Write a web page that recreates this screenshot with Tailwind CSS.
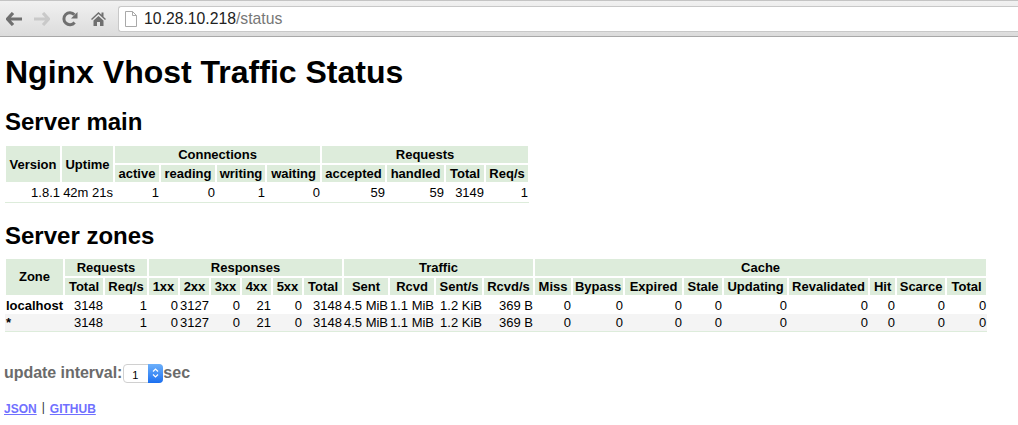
<!DOCTYPE html>
<html lang="en">
<head>
    <meta charset="UTF-8">
    <title>Nginx Vhost Traffic Status</title>
    <script src="https://cdn.jsdelivr.net/npm/@tailwindcss/browser@4"></script>
</head>
<body class="bg-white text-black font-['Liberation_Sans',Arial,sans-serif] overflow-hidden">
    <!-- browser toolbar -->
    <div class="h-[37px] flex items-center border-t border-b border-t-[#c4c4c4] border-b-[#a8a8a8] bg-gradient-to-b from-[#f1f1f1] to-[#dcdcdc] pl-[6px]">
        <svg class="w-[16px] h-[14px]" viewBox="0 0 16 14"><path d="M7 1 1.500 7 7 13M2 7h14" fill="none" stroke="#6f6f6f" stroke-width="3.200"/></svg>
        <svg class="w-[16px] h-[14px] ml-[12px]" viewBox="0 0 16 14"><path d="M9 1l5.500 6L9 13M14 7H0" fill="none" stroke="#c9c9c9" stroke-width="3.200"/></svg>
        <svg class="w-[16px] h-[16px] ml-[12px]" viewBox="0 0 16 16"><path d="M12.600 11.500A6 6 0 1 1 12.400 3.800" fill="none" stroke="#6f6f6f" stroke-width="3"/><path d="M15.500 1v6.500H9z" fill="#6f6f6f"/></svg>
        <svg class="w-[15px] h-[15px] ml-[13px]" viewBox="0 0 15 15"><path d="M7.500 1 0 8l1 1 6.500-6 6.500 6 1-1-2.500-2.300V1.500h-2v2.300zM2.500 9.500 7.500 5l5 4.500V15H9v-4H6v4H2.500z" fill="#6f6f6f"/></svg>
        <div class="ml-[12px] flex-1 h-[26px] flex items-center bg-white border border-[#c8c8c8] rounded-l-[3px] border-r-0 pl-[6px]">
            <svg class="w-[12px] h-[16px]" viewBox="0 0 12 16"><path d="M.5.500h7l4 4v11H.5zM7.500.500v4h4" fill="#fff" stroke="#a9a9a9"/></svg>
            <span class="ml-[7px] text-[15.75px] leading-[20px] text-[#222]">10.28.10.218<span class="text-[#777]">/status</span></span>
        </div>
    </div>

    <div class="px-[5px]">
        <h1 class="text-[32px] leading-[40px] font-bold mt-[15px]">Nginx Vhost Traffic Status</h1>
        <h2 class="text-[24px] leading-[28px] font-bold mt-[16px]">Server main</h2>

        <table class="mt-[8px] -ml-[1px] border-collapse table-fixed w-[524px] text-[13px] leading-[15px]">
            <colgroup>
                <col class="w-[56px]"><col class="w-[53px]"><col class="w-[46px]"><col class="w-[56px]"><col class="w-[50px]"><col class="w-[55px]"><col class="w-[65px]"><col class="w-[59px]"><col class="w-[40px]"><col class="w-[44px]">
            </colgroup>
            <thead class="[&_th]:bg-[#ddecdb] [&_th]:border-2 [&_th]:border-white [&_th]:h-[19px] [&_th]:p-0 [&_th]:font-bold">
                <tr>
                    <th rowspan="2">Version</th>
                    <th rowspan="2">Uptime</th>
                    <th colspan="4">Connections</th>
                    <th colspan="4">Requests</th>
                </tr>
                <tr>
                    <th>active</th><th>reading</th><th>writing</th><th>waiting</th>
                    <th>accepted</th><th>handled</th><th>Total</th><th>Req/s</th>
                </tr>
            </thead>
            <tbody class="[&_td]:text-right [&_td]:p-0 [&_td]:pr-[1px] [&_td]:h-[19px] [&_td]:border-b [&_td]:border-[#ddecdb]">
                <tr>
                    <td>1.8.1</td><td>42m 21s</td><td>1</td><td>0</td><td>1</td><td>0</td><td>59</td><td>59</td><td>3149</td><td>1</td>
                </tr>
            </tbody>
        </table>

        <h2 class="text-[24px] leading-[28px] font-bold mt-[19px]">Server zones</h2>

        <table class="mt-[7px] -ml-[1px] border-collapse table-fixed w-[982px] text-[13px] leading-[15px]">
            <colgroup>
                <col class="w-[59px]"><col class="w-[40px]"><col class="w-[44px]"><col class="w-[31px]"><col class="w-[31px]"><col class="w-[31px]"><col class="w-[31px]"><col class="w-[31px]"><col class="w-[40px]"><col class="w-[46px]"><col class="w-[46px]"><col class="w-[48px]"><col class="w-[51px]"><col class="w-[38px]"><col class="w-[52px]"><col class="w-[59px]"><col class="w-[40px]"><col class="w-[65px]"><col class="w-[81px]"><col class="w-[27px]"><col class="w-[50px]"><col class="w-[41px]">
            </colgroup>
            <thead class="[&_th]:bg-[#ddecdb] [&_th]:border-2 [&_th]:border-white [&_th]:h-[19px] [&_th]:p-0 [&_th]:font-bold">
                <tr>
                    <th rowspan="2">Zone</th>
                    <th colspan="2">Requests</th>
                    <th colspan="6">Responses</th>
                    <th colspan="4">Traffic</th>
                    <th colspan="9">Cache</th>
                </tr>
                <tr>
                    <th>Total</th><th>Req/s</th>
                    <th>1xx</th><th>2xx</th><th>3xx</th><th>4xx</th><th>5xx</th><th>Total</th>
                    <th>Sent</th><th>Rcvd</th><th>Sent/s</th><th>Rcvd/s</th>
                    <th>Miss</th><th>Bypass</th><th>Expired</th><th>Stale</th><th>Updating</th><th>Revalidated</th><th>Hit</th><th>Scarce</th><th>Total</th>
                </tr>
            </thead>
            <tbody class="[&_td]:text-right [&_td]:p-0 [&_td]:pr-[1px] [&_td]:h-[18px] [&_tr:last-child_td]:bg-[#f4f4f4] [&_tr:last-child_td]:border-b [&_tr:last-child_td]:border-[#ddecdb]">
                <tr>
                    <td class="!text-left !pl-[1px] font-bold">localhost</td>
                    <td>3148</td><td>1</td>
                    <td>0</td><td>3127</td><td>0</td><td>21</td><td>0</td><td>3148</td>
                    <td>4.5 MiB</td><td>1.1 MiB</td><td>1.2 KiB</td><td>369 B</td>
                    <td>0</td><td>0</td><td>0</td><td>0</td><td>0</td><td>0</td><td>0</td><td>0</td><td>0</td>
                </tr>
                <tr>
                    <td class="!text-left !pl-[1px] font-bold">*</td>
                    <td>3148</td><td>1</td>
                    <td>0</td><td>3127</td><td>0</td><td>21</td><td>0</td><td>3148</td>
                    <td>4.5 MiB</td><td>1.1 MiB</td><td>1.2 KiB</td><td>369 B</td>
                    <td>0</td><td>0</td><td>0</td><td>0</td><td>0</td><td>0</td><td>0</td><td>0</td><td>0</td>
                </tr>
            </tbody>
        </table>

        <div class="mt-[31px] flex items-center text-[16px] leading-[20px] font-bold text-[#6b6b6b] -ml-[1px]">
            <span class="tracking-[-0.05px]">update interval:</span>
            <div class="relative ml-[1px] w-[40px] h-[19px]">
                <select class="appearance-none w-full h-full bg-white border border-[#d0d0d0] rounded-[4px] pl-[8px] text-[11px] font-normal text-black">
                    <option>1</option>
                </select>
                <span class="absolute right-0 top-0 w-[15px] h-[19px] rounded-r-[4px] bg-gradient-to-b from-[#6cb0fb] to-[#1a6ff0] flex items-center justify-center">
                    <svg class="w-[7px] h-[12px]" viewBox="0 0 7 12"><path d="M1 4.500 3.500 2 6 4.500M1 7.500 3.500 10 6 7.500" fill="none" stroke="#fff" stroke-width="1.200"/></svg>
                </span>
            </div>
            <span>sec</span>
        </div>

        <div class="mt-[18px] -ml-[1px] flex items-baseline text-[12px] leading-[16px] font-bold">
            <a href="#" class="underline text-[#7070ff]">JSON</a>
            <span class="ml-[5px] mr-[5px] font-normal text-[#333] relative -top-[2px]">|</span>
            <a href="#" class="underline text-[#7070ff]">GITHUB</a>
        </div>
    </div>
</body>
</html>
